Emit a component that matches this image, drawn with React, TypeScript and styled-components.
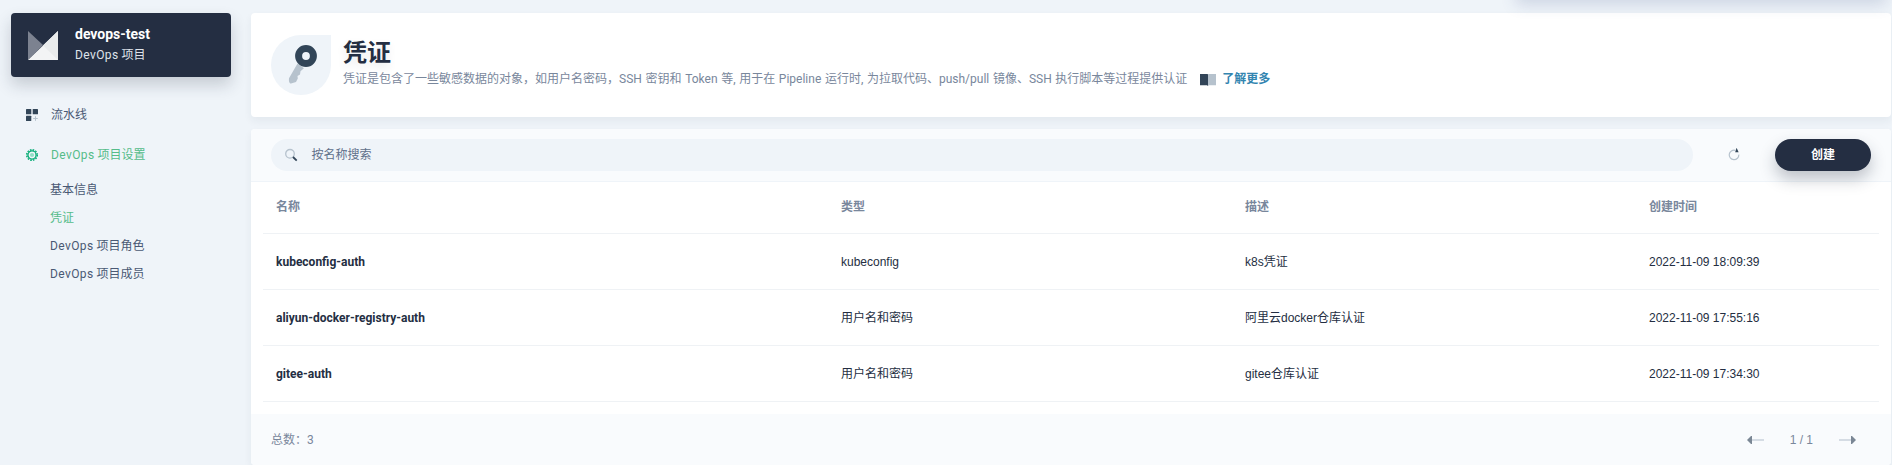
import React from 'react';
import styled, { createGlobalStyle, css } from 'styled-components';

const GlobalStyle = createGlobalStyle`
  * { box-sizing: border-box; }
  body {
    margin: 0;
    height: 465px;
    overflow: hidden;
    background: #eff4f9;
    color: #242e42;
    font-family: Roboto, 'Noto Sans CJK SC', sans-serif;
    font-size: 12px;
    line-height: 20px;
  }
`;

const Page = styled.div`
  position: relative;
  display: flex;
  width: 1892px;
  height: 465px;
  padding: 13px 1px 0 11px;
  gap: 20px;
  overflow: hidden;
`;

const FloatingBar = styled.div`
  position: absolute;
  top: -20px;
  right: 6px;
  width: 370px;
  height: 20px;
  box-shadow: 0 4px 16px 0 rgba(60, 80, 140, 0.2);
`;

const Sidebar = styled.aside`
  width: 220px;
  flex: none;
`;

const ProjectCard = styled.div`
  display: flex;
  align-items: center;
  height: 64px;
  padding: 0 16px;
  gap: 16px;
  border-radius: 4px;
  background: #242e42;
  box-shadow: 0 8px 16px 0 rgba(35, 45, 65, 0.2);
`;

const ProjectName = styled.div`
  margin: -1px 0 1px;
  font-size: 14px;
  font-weight: 700;
  color: #fff;
`;

const ProjectKind = styled.div`
  color: #dfe3ea;
`;

const Brand = styled.span`
  margin-right: 3px;
  letter-spacing: 0.4px;
`;

const Nav = styled.nav`
  display: flex;
  flex-direction: column;
  padding: 17px 12px 0 15px;
`;

const NavItem = styled.a<{ $active?: boolean }>`
  display: flex;
  align-items: center;
  height: 40px;
  gap: 13px;
  padding-top: 1px;
  color: ${p => (p.$active ? '#55bc8a' : '#4a5974')};
`;

const SubNav = styled.div`
  display: flex;
  flex-direction: column;
  gap: 8px;
  padding: 6px 0 0 24px;
`;

const SubItem = styled.a<{ $active?: boolean }>`
  color: ${p => (p.$active ? '#55bc8a' : '#4a5974')};
`;

const Main = styled.main`
  display: flex;
  flex: 1;
  flex-direction: column;
  gap: 12px;
`;

const card = css`
  border-radius: 4px;
  background: #fff;
  box-shadow: 0 4px 8px 0 rgba(36, 46, 66, 0.06);
`;

const Banner = styled.header`
  ${card}
  display: flex;
  height: 104px;
  padding: 22px 20px;
  gap: 12px;
`;

const BannerIcon = styled.div`
  display: flex;
  align-items: center;
  justify-content: center;
  width: 60px;
  height: 60px;
  border-radius: 30px 0 30px 30px;
  background: #eff4f9;
`;

const Title = styled.h1`
  margin: 2px 0 0;
  font-size: 24px;
  font-weight: 700;
  line-height: 32px;
  text-shadow: 0 4px 8px rgba(36, 46, 66, 0.1);
`;

const Description = styled.div`
  display: flex;
  align-items: center;
  word-spacing: 0.68px;
  color: #79879c;
`;

const MoreLink = styled.a`
  display: flex;
  align-items: center;
  gap: 6px;
  margin-left: 13px;
  font-weight: 700;
  color: #3385b0;
`;

const TableCard = styled.section`
  ${card}
  display: flex;
  flex-direction: column;
  height: 336px;
  overflow: hidden;
`;

const Toolbar = styled.div`
  display: flex;
  align-items: center;
  height: 53px;
  padding: 0 20px;
  border-bottom: 1px solid #eff4f9;
  background: #f9fbfd;
`;

const Search = styled.div`
  display: flex;
  flex: 1;
  align-items: center;
  height: 32px;
  padding: 0 13px;
  gap: 13.5px;
  border-radius: 16px;
  background: #eff4f9;
  color: #5f708a;
`;

const RefreshButton = styled.button`
  display: flex;
  align-items: center;
  justify-content: center;
  width: 82px;
  height: 32px;
  padding: 0 0 3px;
  border: 0;
  background: none;
`;

const CreateButton = styled.button`
  position: relative;
  width: 96px;
  height: 32px;
  padding: 0;
  border: 0;
  border-radius: 16px;
  background: #242e42;
  color: #fff;
  font: inherit;
  font-weight: 700;
  box-shadow: 0 8px 16px 0 rgba(35, 45, 65, 0.28);
`;

const Table = styled.div`
  flex: 1;
  padding: 0 12px;
`;

const Row = styled.div<{ $head?: boolean }>`
  display: grid;
  grid-template-columns: 565px 404px 404px 1fr;
  align-items: center;
  height: ${p => (p.$head ? 52 : 56)}px;
  padding: ${p => (p.$head ? '0 13px 1px' : '0 13px')};
  border-bottom: 1px solid #eff2f5;
  color: ${p => (p.$head ? '#79879c' : '#242e42')};
  font-weight: ${p => (p.$head ? 700 : 400)};
`;

const Name = styled.span`
  font-weight: 700;
`;

const Cell = styled.span`
  font-family: 'Liberation Sans', 'Noto Sans CJK SC', sans-serif;
`;

const Footer = styled.footer`
  display: flex;
  align-items: center;
  justify-content: space-between;
  height: 51px;
  padding: 0 35px 0 20px;
  background: #f9fbfd;
  color: #79879c;
`;

const Pager = styled.div`
  display: flex;
  align-items: center;
  gap: 26px;
  font-family: 'Liberation Sans', sans-serif;
`;

const Logo = () => (
  <svg width="32" height="32" viewBox="0 0 32 32">
    <path d="M1 2l15 14L1 31z" fill="#7c8290" />
    <path d="M31 2v29H1z" fill="#f3f4f5" />
    <path d="M31 2v29L16 16.500z" fill="#e9ebec" />
  </svg>
);

const PipelineIcon = () => (
  <svg width="12" height="12" viewBox="0 0 12 12">
    <rect width="5.3" height="5.3" rx=".6" fill="#324558" />
    <rect x="6.7" width="5.3" height="5.3" rx=".6" fill="#324558" />
    <rect y="6.7" width="5.3" height="5.3" rx=".6" fill="#324558" />
    <path d="M9.5 7.200v4.600M7.200 9.500h4.600" stroke="#b6c2cd" />
  </svg>
);

const GearIcon = () => (
  <svg width="12" height="12" viewBox="0 0 12 12">
    <circle cx="6" cy="6" r="5.3" fill="none" stroke="#00aa72" strokeWidth="1.4" strokeDasharray="1.6 1.175" />
    <circle cx="6" cy="6" r="4.1" fill="#eff4f9" stroke="#00aa72" strokeWidth="1.3" />
    <circle cx="6" cy="6" r="2.1" fill="#90e0c5" />
  </svg>
);

const KeyIcon = () => (
  <svg width="48" height="48" viewBox="0 0 48 48">
    <path d="M20.5 22.5L12 37.3c-.4 4.2.8 5.3 2 5.2l5-1.5 1.8-3.500-.3-2.500 2.500-1.500.5-3.200 3.400-3z" fill="#b6c2cd" />
    <circle cx="29" cy="15" r="7.4" fill="none" stroke="#324558" strokeWidth="7" />
  </svg>
);

const BookIcon = () => (
  <svg width="16" height="13" viewBox="0 0 16 13">
    <path d="M0 1h7.500l.5.5V13l-1-.8H0z" fill="#324558" />
    <path d="M16 1H8.500L8 1.500V13l1-.8h7z" fill="#b6c2cd" />
  </svg>
);

const SearchIcon = () => (
  <svg width="14" height="14" viewBox="0 0 14 14">
    <circle cx="6" cy="5.8" r="4.3" fill="none" stroke="#b6c2cd" strokeWidth="1.3" />
    <path d="M9 9l3.700 3.700" stroke="#324558" strokeWidth="1.8" />
  </svg>
);

const RefreshIcon = () => (
  <svg width="14" height="14" viewBox="0 0 14 14">
    <path d="M8.300 3.300A4.800 4.800 0 1 0 11.800 7.600" fill="none" stroke="#b6c2cd" strokeWidth="1.2" />
    <path d="M9.600.8l2 4.400H8.200z" fill="#324558" />
  </svg>
);

const ArrowIcon = ({ next }: { next?: boolean }) => (
  <svg width="17" height="10" viewBox="0 0 17 10">
    <g transform={next ? 'matrix(-1 0 0 1 17 0)' : undefined}>
      <path d="M4 5h13" stroke="#d5dce4" strokeWidth="2" />
      <path d="M0 5l4-4h1v8H4z" fill="#7b8795" />
    </g>
  </svg>
);

const credentials = [
  { name: 'kubeconfig-auth', type: 'kubeconfig', note: 'k8s凭证', time: '2022-11-09 18:09:39' },
  { name: 'aliyun-docker-registry-auth', type: '用户名和密码', note: '阿里云docker仓库认证', time: '2022-11-09 17:55:16' },
  { name: 'gitee-auth', type: '用户名和密码', note: 'gitee仓库认证', time: '2022-11-09 17:34:30' },
];

export default function App() {
  return (
    <>
      <GlobalStyle />
      <Page>
        <Sidebar>
          <ProjectCard>
            <Logo />
            <div>
              <ProjectName>devops-test</ProjectName>
              <ProjectKind><Brand>DevOps</Brand>项目</ProjectKind>
            </div>
          </ProjectCard>
          <Nav>
            <NavItem><PipelineIcon />流水线</NavItem>
            <NavItem $active><GearIcon /><span><Brand>DevOps</Brand>项目设置</span></NavItem>
            <SubNav>
              <SubItem>基本信息</SubItem>
              <SubItem $active>凭证</SubItem>
              <SubItem><Brand>DevOps</Brand>项目角色</SubItem>
              <SubItem><Brand>DevOps</Brand>项目成员</SubItem>
            </SubNav>
          </Nav>
        </Sidebar>
        <Main>
          <Banner>
            <BannerIcon><KeyIcon /></BannerIcon>
            <div>
              <Title>凭证</Title>
              <Description>
                凭证是包含了一些敏感数据的对象，如用户名密码，SSH 密钥和 Token 等, 用于在 Pipeline 运行时, 为拉取代码、push/pull 镜像、SSH 执行脚本等过程提供认证
                <MoreLink><BookIcon />了解更多</MoreLink>
              </Description>
            </div>
          </Banner>
          <TableCard>
            <Toolbar>
              <Search><SearchIcon />按名称搜索</Search>
              <RefreshButton aria-label="刷新"><RefreshIcon /></RefreshButton>
              <CreateButton>创建</CreateButton>
            </Toolbar>
            <Table>
              <Row $head>
                <span>名称</span>
                <span>类型</span>
                <span>描述</span>
                <span>创建时间</span>
              </Row>
              {credentials.map(c => (
                <Row key={c.name}>
                  <Name>{c.name}</Name>
                  <Cell>{c.type}</Cell>
                  <Cell>{c.note}</Cell>
                  <Cell>{c.time}</Cell>
                </Row>
              ))}
            </Table>
            <Footer>
              <span>总数：3</span>
              <Pager><ArrowIcon />1 / 1<ArrowIcon next /></Pager>
            </Footer>
          </TableCard>
        </Main>
        <FloatingBar />
      </Page>
    </>
  );
}
